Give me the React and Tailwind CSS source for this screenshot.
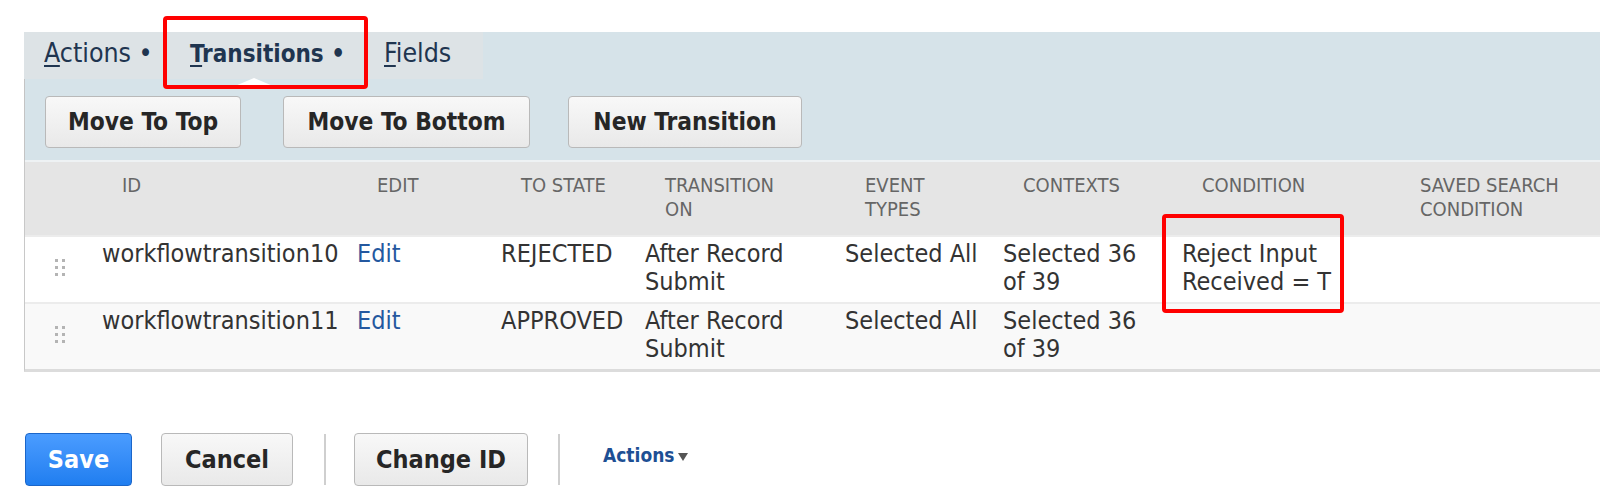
import React from "react";

const font = {
  fontFamily: "'DejaVu Sans Condensed', 'DejaVu Sans', sans-serif",
};

const cols =
  "grid grid-cols-[77px_255px_144px_144px_200px_158px_179px_218px_1fr]";

const headers = [
  [""],
  ["ID"],
  ["EDIT"],
  ["TO STATE"],
  ["TRANSITION", "ON"],
  ["EVENT", "TYPES"],
  ["CONTEXTS"],
  ["CONDITION"],
  ["SAVED SEARCH", "CONDITION"],
];

const rows = [
  {
    id: "workflowtransition10",
    state: "REJECTED",
    condition: ["Reject Input", "Received = T"],
  },
  { id: "workflowtransition11", state: "APPROVED", condition: [] },
];

const Lines = ({ lines }) =>
  lines.map((l, i) => (
    <span key={i} className="block">
      {l}
    </span>
  ));

const DragHandle = () => (
  <div className="grid grid-cols-2 gap-x-[4px] gap-y-[4px] w-[10px] mt-[22px] ml-[30px]">
    {[0, 1, 2, 3, 4, 5].map((i) => (
      <span key={i} className="block w-[3px] h-[3px] bg-[#b4b4b4]" />
    ))}
  </div>
);

const GreyButton = ({ children, className = "" }) => (
  <button
    className={
      "rounded-[4px] border border-[#b9b9b9] bg-gradient-to-b from-[#f8f8f8] to-[#e9e9e9] font-bold text-[#262626] " +
      className
    }
  >
    {children}
  </button>
);

export default function App() {
  return (
    <div
      className="w-[1600px] h-[504px] bg-white relative overflow-hidden font-stretch-condensed"
      style={font}
    >
      {/* subtab panel */}
      <div className="ml-[24px] pt-[32px]">
        <div className="bg-[#d6e3e9]">
          <div className="flex items-end h-[47px] w-[459px] bg-[#dde3e6] text-[26.5px] text-[#1f3550]">
            <div className="pl-[20px] pb-[6px] w-[166px]">
              <span className="underline underline-offset-[3px]">A</span>ctions •
            </div>
            <div className="pb-[7px] w-[194px] text-[24px] font-bold relative">
              <span className="underline underline-offset-[3px]">T</span>ransitions •
              <span className="absolute left-[45px] bottom-[-7px] w-0 h-0 border-l-[19px] border-r-[19px] border-b-[8px] border-l-transparent border-r-transparent border-b-white" />
            </div>
            <div className="pb-[6px]">
              <span className="underline underline-offset-[3px]">F</span>ields
            </div>
          </div>
          <div className="border-l border-[#c4c4c4] flex pl-[20px] pt-[17px] pb-[12px]">
            <GreyButton className="w-[196px] h-[52px] text-[24.3px]">Move To Top</GreyButton>
            <GreyButton className="ml-[42px] w-[247px] h-[52px] text-[24.3px]">
              Move To Bottom
            </GreyButton>
            <GreyButton className="ml-[38px] w-[234px] h-[52px] text-[24.3px]">
              New Transition
            </GreyButton>
          </div>
        </div>

        {/* table */}
        <div className="border-l border-b-[3px] border-[#c8c8c8] border-b-[#dcdcdc]">
          <div
            className={
              cols +
              " h-[75px] bg-[#e5e5e5] border-t-2 border-[#eef2f4] text-[20px] leading-[24px] text-[#666666]"
            }
          >
            {headers.map((h, i) => (
              <div key={i} className="pl-[20px] pt-[11px]">
                <Lines lines={h} />
              </div>
            ))}
          </div>
          {rows.map((r, i) => (
            <div
              key={r.id}
              className={
                cols +
                " h-[67px] text-[25px] leading-[28px] text-[#333333] border-t-2 border-[#ececec] " +
                (i === 0 ? "bg-white" : "bg-[#f9f9f9]")
              }
            >
              <div>
                <DragHandle />
              </div>
              <div className="pt-[3px]">{r.id}</div>
              <div className="pt-[3px] text-[#24589f]">Edit</div>
              <div className="pt-[3px]">{r.state}</div>
              <div className="pt-[3px]">
                <Lines lines={["After Record", "Submit"]} />
              </div>
              <div className="pt-[3px]">Selected All</div>
              <div className="pt-[3px]">
                <Lines lines={["Selected 36", "of 39"]} />
              </div>
              <div className="pt-[3px]">
                <Lines lines={r.condition} />
              </div>
              <div />
            </div>
          ))}
        </div>
      </div>

      {/* bottom buttons */}
      <div className="flex items-center mt-[61px] ml-[25px]">
        <button className="w-[107px] h-[53px] rounded-[4px] border border-[#1b66c9] bg-gradient-to-b from-[#4a9cff] to-[#1f7ef0] text-[25px] font-bold text-white">
          Save
        </button>
        <GreyButton className="ml-[29px] w-[132px] h-[53px] text-[25px]">Cancel</GreyButton>
        <div className="ml-[31px] w-[2px] h-[51px] bg-[#cfcfcf]" />
        <GreyButton className="ml-[28px] w-[174px] h-[53px] text-[25px]">Change ID</GreyButton>
        <div className="ml-[30px] w-[2px] h-[51px] bg-[#cfcfcf]" />
        <div className="ml-[43px] mb-[8px] text-[19px] font-bold text-[#1d4f94] flex items-center gap-[4px]">
          Actions
          <span className="mt-[3px] w-0 h-0 border-l-[5px] border-r-[5px] border-t-[8px] border-l-transparent border-r-transparent border-t-[#555555]" />
        </div>
      </div>

      {/* annotation boxes */}
      <div className="absolute left-[163px] top-[16px] w-[205px] h-[73px] border-[4px] border-[#ff0000] rounded-[4px]" />
      <div className="absolute left-[1162px] top-[214px] w-[182px] h-[99px] border-[4px] border-[#ff0000] rounded-[4px]" />
    </div>
  );
}
